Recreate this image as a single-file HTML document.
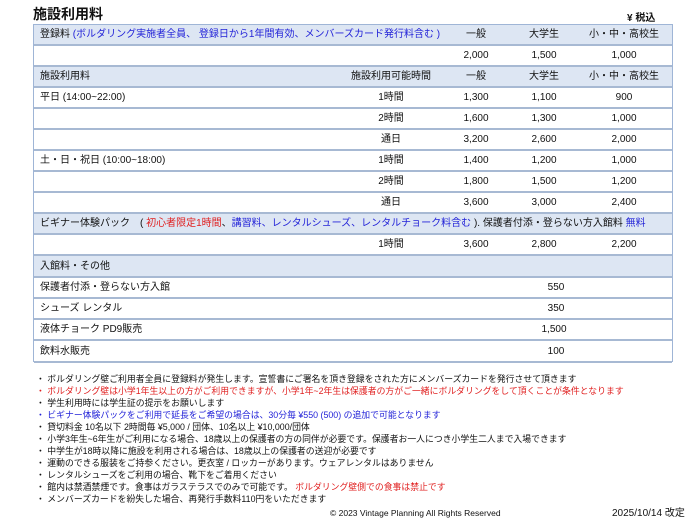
<!DOCTYPE html>
<html><head><meta charset="utf-8"><style>
*{margin:0;padding:0;box-sizing:border-box}
body{width:700px;height:525px;background:#fff;font-family:"Liberation Sans","Noto Sans CJK JP",sans-serif;color:#111;position:relative;overflow:hidden}
.t{position:absolute;left:33px;width:640px;border-left:1px solid #9fb5d6;border-right:1px solid #9fb5d6}
.r{position:absolute;left:0;width:638px;border-bottom:2px solid #a7b9d3;font-size:10px}
.h{background:#dde6f3}
.r>span{position:absolute;top:0;line-height:20px;white-space:nowrap}
.c{text-align:center;width:80px;margin-left:-40px}
.b{color:#2323d8}.red{color:#e01f1f}
.n{position:absolute;left:36px;font-size:8.85px;line-height:12px;white-space:nowrap}
</style></head><body>
<div style="position:absolute;left:33px;top:4px;font-size:14px;font-weight:bold">施設利用料</div>
<div style="position:absolute;left:627px;top:9px;font-size:10px;font-weight:bold">¥ 税込</div>
<div class="t" style="top:24px;height:338px;border-top:1px solid #9fb5d6">
<div class="r h" style="top:0;height:21px"><span style="left:6px">登録料 <span class="b">(ボルダリング実施者全員、 登録日から1年間有効、メンバーズカード発行料含む )</span></span><span class="c" style="left:442px">一般</span><span class="c" style="left:510px">大学生</span><span class="c" style="left:590px">小・中・高校生</span></div>
<div class="r" style="top:21px;height:21px"><span class="c" style="left:442px">2,000</span><span class="c" style="left:510px">1,500</span><span class="c" style="left:590px">1,000</span></div>
<div class="r h" style="top:42px;height:21px"><span style="left:6px">施設利用料</span><span class="c" style="left:357px">施設利用可能時間</span><span class="c" style="left:442px">一般</span><span class="c" style="left:510px">大学生</span><span class="c" style="left:590px">小・中・高校生</span></div>
<div class="r" style="top:63px;height:21px"><span style="left:6px">平日 (14:00~22:00)</span><span class="c" style="left:357px">1時間</span><span class="c" style="left:442px">1,300</span><span class="c" style="left:510px">1,100</span><span class="c" style="left:590px">900</span></div>
<div class="r" style="top:84px;height:21px"><span class="c" style="left:357px">2時間</span><span class="c" style="left:442px">1,600</span><span class="c" style="left:510px">1,300</span><span class="c" style="left:590px">1,000</span></div>
<div class="r" style="top:105px;height:21px"><span class="c" style="left:357px">通日</span><span class="c" style="left:442px">3,200</span><span class="c" style="left:510px">2,600</span><span class="c" style="left:590px">2,000</span></div>
<div class="r" style="top:126px;height:21px"><span style="left:6px">土・日・祝日 (10:00~18:00)</span><span class="c" style="left:357px">1時間</span><span class="c" style="left:442px">1,400</span><span class="c" style="left:510px">1,200</span><span class="c" style="left:590px">1,000</span></div>
<div class="r" style="top:147px;height:21px"><span class="c" style="left:357px">2時間</span><span class="c" style="left:442px">1,800</span><span class="c" style="left:510px">1,500</span><span class="c" style="left:590px">1,200</span></div>
<div class="r" style="top:168px;height:21px"><span class="c" style="left:357px">通日</span><span class="c" style="left:442px">3,600</span><span class="c" style="left:510px">3,000</span><span class="c" style="left:590px">2,400</span></div>
<div class="r h" style="top:189px;height:21px"><span style="left:6px">ビギナー体験パック　( <span class="red">初心者限定1時間</span>、<span class="b">講習料、レンタルシューズ、レンタルチョーク料含む</span> ). 保護者付添・登らない方入館料 <span class="b">無料</span></span></div>
<div class="r" style="top:210px;height:21px"><span class="c" style="left:357px">1時間</span><span class="c" style="left:442px">3,600</span><span class="c" style="left:510px">2,800</span><span class="c" style="left:590px">2,200</span></div>
<div class="r h" style="top:231px;height:22px"><span style="left:6px;line-height:21px">入館料・その他</span></div>
<div class="r" style="top:253px;height:21px"><span style="left:6px">保護者付添・登らない方入館</span><span class="c" style="left:522px">550</span></div>
<div class="r" style="top:274px;height:21px"><span style="left:6px">シューズ レンタル</span><span class="c" style="left:522px">350</span></div>
<div class="r" style="top:295px;height:21px"><span style="left:6px">液体チョーク PD9販売</span><span class="c" style="left:520px">1,500</span></div>
<div class="r" style="top:316px;height:22px"><span style="left:6px;line-height:21px">飲料水販売</span><span class="c" style="left:522px;line-height:21px">100</span></div>
</div>
<div class="n" style="top:373px">・ ボルダリング壁ご利用者全員に登録料が発生します。宣誓書にご署名を頂き登録をされた方にメンバーズカードを発行させて頂きます</div>
<div class="n red" style="top:385px">・ ボルダリング壁は小学1年生以上の方がご利用できますが、小学1年~2年生は保護者の方がご一緒にボルダリングをして頂くことが条件となります</div>
<div class="n" style="top:397px">・ 学生利用時には学生証の提示をお願いします</div>
<div class="n b" style="top:409px">・ ビギナー体験パックをご利用で延長をご希望の場合は、30分毎 ¥550 (500) の追加で可能となります</div>
<div class="n" style="top:421px">・ 貸切料金 10名以下 2時間毎 ¥5,000 / 団体、10名以上 ¥10,000/団体</div>
<div class="n" style="top:433px">・ 小学3年生~6年生がご利用になる場合、18歳以上の保護者の方の同伴が必要です。保護者お一人につき小学生二人まで入場できます</div>
<div class="n" style="top:445px">・ 中学生が18時以降に施設を利用される場合は、18歳以上の保護者の送迎が必要です</div>
<div class="n" style="top:457px">・ 運動のできる服装をご持参ください。更衣室 / ロッカーがあります。ウェアレンタルはありません</div>
<div class="n" style="top:469px">・ レンタルシューズをご利用の場合、靴下をご着用ください</div>
<div class="n" style="top:481px">・ 館内は禁酒禁煙です。食事はガラステラスでのみで可能です。 <span class="red">ボルダリング壁側での食事は禁止です</span></div>
<div class="n" style="top:493px">・ メンバーズカードを紛失した場合、再発行手数料110円をいただきます</div>
<div style="position:absolute;left:330px;top:508px;font-size:8.5px;white-space:nowrap">© 2023 Vintage Planning  All Rights Reserved</div>
<div style="position:absolute;left:612px;top:504px;font-size:10px;white-space:nowrap">2025/10/14 改定</div>
</body></html>
